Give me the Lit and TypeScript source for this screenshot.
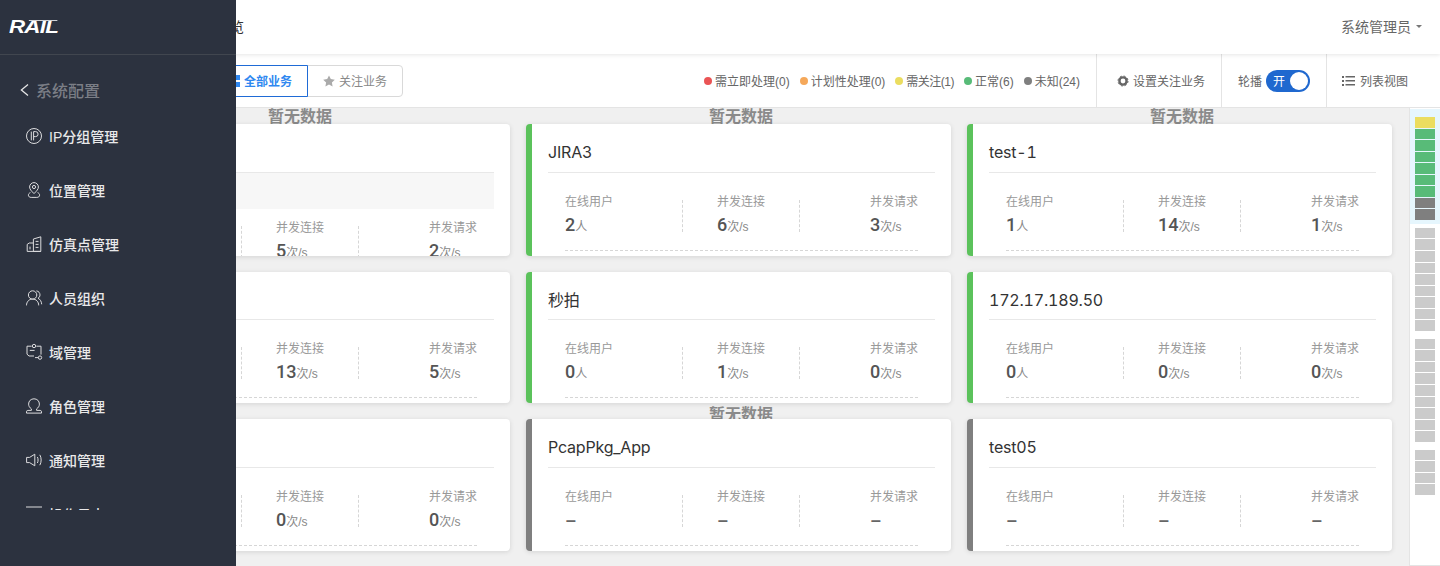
import { LitElement, html, css, svg, unsafeCSS } from 'lit';
import { customElement } from 'lit/decorators.js';

const FONT = unsafeCSS(`"Liberation Sans", "Noto Sans CJK SC", sans-serif`);

type Metric = { online: string; conn: string; req: string };
type CardData = { name: string; color: string; nodata?: boolean; band?: boolean; m?: Metric };

const GREEN = '#5bc25b';
const GREY = '#7f7f7f';

const cards: CardData[] = [
  { name: 'JIRA1', color: GREEN, nodata: true, band: true, m: { online: '1', conn: '5', req: '2' } },
  { name: 'JIRA3', color: GREEN, nodata: true, m: { online: '2', conn: '6', req: '3' } },
  { name: 'test-1', color: GREEN, nodata: true, m: { online: '1', conn: '14', req: '1' } },
  { name: 'GitLab', color: GREEN, m: { online: '3', conn: '13', req: '5' } },
  { name: '秒拍', color: GREEN, m: { online: '0', conn: '1', req: '0' } },
  { name: '172.17.189.50', color: GREEN, m: { online: '0', conn: '0', req: '0' } },
  { name: 'Wiki', color: GREEN, m: { online: '0', conn: '0', req: '0' } },
  { name: 'PcapPkg_App', color: GREY, nodata: true },
  { name: 'test05', color: GREY },
];

const legend = [
  { label: '需立即处理(0)', color: '#ea5455' },
  { label: '计划性处理(0)', color: '#f5a85a' },
  { label: '需关注(1)', color: '#ebdd60', tight: true },
  { label: '正常(6)', color: '#58bb78' },
  { label: '未知(24)', color: '#7f7f7f' },
];

const railGroups: string[][] = [
  ['#ebdd60', ...Array(6).fill('#58bb78'), '#7f7f7f', '#7f7f7f'],
  Array(9).fill('#cbcbcb'),
  Array(9).fill('#cbcbcb'),
  Array(4).fill('#cbcbcb'),
];

const icons = [
  svg`<circle cx="8" cy="8" r="7.5"/><path d="M5.3 3.6v8.8M7.6 12.4V3.6h2a2.5 2.5 0 0 1 0 5H7.6"/>`,
  svg`<path d="M8 11.6C5.4 9 3.6 7.2 3.6 5a4.4 4.4 0 0 1 8.8 0c0 2.2-1.8 4-4.4 6.6z"/><circle cx="8" cy="5" r="1.6"/><path d="M4.4 10.6C3 11.2 2.4 12 2.4 13.2c0 1.4 1.2 2.2 2.8 2.2h5.6c1.6 0 2.8-.8 2.8-2.2 0-1.2-.6-2-2-2.6"/>`,
  svg`<path d="M7.4 15.4V3L14.8.8v14.6zM7.4 7H3.2L1.2 8.4v7h13.6M9.6 5.4h2.9M9.6 8.4h2.9M9.6 11.4h2.9M4 10.6v2.8"/>`,
  svg`<circle cx="6.6" cy="5" r="4.2"/><path d="M.5 15.4c0-3.6 2.6-6.4 6.1-6.4s6.1 2.8 6.1 6.4M10.4 .9c2.2 .2 3.6 2 3.6 4 0 1.4-.8 2.7-2 3.4 2.2 .9 3.5 3.2 3.7 6"/>`,
  svg`<path d="M5.6 2.2H1v8l2 1.8h5M10.4 2.2h4.6v8.4M9 13.6h3.4"/><circle cx="8" cy="2" r="1.7"/><circle cx="14" cy="13.6" r="1.7"/><path d="M3.8 6.4h4.8"/>`,
  svg`<path d="M8 .8c3.2 0 5.4 2.3 5.4 5.3 0 2-1 3.5-2.8 4.8v1.5h3.6c.8 0 1.3.6 1.3 1.4v1.3H.5v-1.3c0-.8.5-1.4 1.3-1.4h3.6v-1.5C3.6 9.6 2.6 8.1 2.6 6.1 2.6 3.1 4.8.8 8 .8z"/>`,
  svg`<path d="M.6 5.4h3L8.8 2.2v11.6L3.6 10.6h-3zM11.4 5c.9 1.8.9 4.2 0 6M13.8 2.8c1.8 3 1.8 7.4 0 10.4"/>`,
  svg`<path d="M0 1h16M0 6h16M0 11h16"/>`,
];

const menu = ['IP分组管理', '位置管理', '仿真点管理', '人员组织', '域管理', '角色管理', '通知管理', '操作日志'];

@customElement('app-root')
export class AppRoot extends LitElement {
  static styles = css`
    :host {
      display: block;
      width: 1440px;
      height: 566px;
      overflow: hidden;
      position: relative;
      font-family: ${FONT};
      background: #f0f0f0;
      color: #666;
    }
    * { box-sizing: border-box; }

    .sidebar {
      position: absolute;
      left: 0;
      top: 0;
      bottom: 0;
      width: 236px;
      background: #2c323f;
      z-index: 5;
    }
    .logo {
      height: 55px;
      border-bottom: 1px solid #41464f;
      padding: 18px 0 0 9px;
    }
    .logo span {
      display: block;
      position: relative;
      width: 49px;
      font: italic bold 18px/18px "Liberation Sans", sans-serif;
      letter-spacing: -0.6px;
      color: #fff;
      transform: scaleX(1.24);
      transform-origin: left center;
    }
    .logo span::after {
      content: '';
      position: absolute;
      left: 16px;
      top: 2px;
      width: 23px;
      height: 1px;
      background: #cfd1d4;
    }
    .back {
      height: 54px;
      display: flex;
      align-items: center;
      padding: 16px 0 0 20px;
      gap: 7px;
      font-size: 16px;
      font-weight: 500;
      color: #7b7e86;
    }
    .back svg { width: 9px; height: 12px; fill: none; stroke: #e6e6e6; stroke-width: 1.3; }
    .menu {
      height: 401px;
      overflow: hidden;
    }
    .menu-item {
      height: 54px;
      display: flex;
      align-items: center;
      padding-left: 26px;
      gap: 7px;
      font-size: 14px;
      font-weight: 500;
      color: #e9e9ea;
    }
    .menu-item svg { width: 16px; height: 16px; fill: none; stroke: #dcdcde; stroke-width: 1; flex: none; overflow: visible; }

    .topbar {
      height: 54px;
      background: #fff;
      box-shadow: 0 1px 4px rgba(0, 0, 0, 0.1);
      position: relative;
      z-index: 2;
      display: flex;
      align-items: center;
      justify-content: space-between;
      padding: 0 18px 2px 188px;
      font-size: 14px;
      color: #333;
    }
    .user { color: #666; display: flex; align-items: center; gap: 5px; }
    .caret {
      width: 0;
      height: 0;
      border: 3px solid transparent;
      border-top: 3px solid #777;
      margin-top: 3px;
    }

    .toolbar {
      height: 54px;
      background: #fff;
      border-bottom: 1px solid #e4e4e4;
      display: flex;
      align-items: stretch;
      justify-content: space-between;
      padding-left: 212px;
      font-size: 12px;
      color: #666;
    }
    .tabs { display: flex; align-items: center; }
    .tab {
      width: 96px;
      height: 32px;
      display: flex;
      align-items: center;
      justify-content: center;
      gap: 4px;
      border: 1px solid #d9d9d9;
      color: #888;
      border-radius: 0 4px 4px 0;
      margin-left: -1px;
    }
    .tab.active {
      border-color: #1f6bd6;
      color: #2f88f0;
      font-weight: 700;
      border-radius: 4px 0 0 4px;
      margin-left: 0;
      position: relative;
      z-index: 1;
    }
    .tab svg { width: 12px; height: 12px; }
    .tools { display: flex; align-items: stretch; }
    .legend { display: flex; align-items: center; gap: 10px; padding-right: 16px; }
    .legend-item { display: flex; align-items: center; gap: 3px; white-space: nowrap; }
    .legend-item.tight { letter-spacing: -0.5px; }
    .dot { width: 8px; height: 8px; border-radius: 50%; }
    .tool {
      border-left: 1px solid #e4e4e4;
      display: flex;
      align-items: center;
      white-space: nowrap;
    }
    .tool.focus { width: 125px; padding-left: 20px; gap: 4px; }
    .tool.carousel { width: 105px; padding-left: 16px; gap: 4px; }
    .tool.view { width: 114px; padding-left: 15px; gap: 5px; }
    .tool svg { flex: none; }
    .switch {
      width: 44px;
      height: 22px;
      border-radius: 11px;
      background: #1f68cf;
      color: #fff;
      font-size: 12px;
      padding: 0 2px 0 7px;
      display: flex;
      align-items: center;
      justify-content: space-between;
    }
    .knob { width: 18px; height: 18px; border-radius: 50%; background: #fff; }

    .body {
      height: 458px;
      display: flex;
    }
    .grid {
      flex: 1;
      display: grid;
      grid-template-columns: repeat(3, 425px);
      grid-auto-rows: 131.5px;
      column-gap: 16px;
      row-gap: 16px;
      padding: 16px 0 0 85px;
    }
    .cell { position: relative; }
    .nodata {
      position: absolute;
      left: 5px;
      right: 0;
      top: -17px;
      text-align: center;
      font-size: 16px;
      line-height: 20px;
      font-weight: 700;
      color: #8a8a8a;
    }
    .cell:nth-child(8) .nodata { top: -14px; }
    .card {
      position: relative;
      height: 100%;
      overflow: hidden;
      background: #fff;
      border-radius: 4px;
      border-left: 6px solid;
      box-shadow: 0 1px 5px rgba(0, 0, 0, 0.12);
      padding: 0 16px;
    }
    .title {
      height: 48.5px;
      border-bottom: 1px solid #e8e8e8;
      padding-top: 17px;
      font: 400 16px/22px Inter, ${FONT};
      font-feature-settings: 'tnum';
      letter-spacing: -0.2px;
      color: #333;
    }
    .band { height: 36px; background: #f7f7f7; }
    .stats {
      margin: 0 17px;
      padding-top: 27px;
      height: 78px;
      display: flex;
      border-bottom: 1px dashed #d6d6d6;
    }
    .band + .stats { margin-top: -10px; }
    .stat { height: 32px; }
    .stat.first { width: 117px; }
    .stat.mid {
      width: 118px;
      border-left: 1px dashed #d6d6d6;
      border-right: 1px dashed #d6d6d6;
      padding-left: 34px;
    }
    .stat.last { width: 48px; margin-left: auto; }
    .label { font-size: 12px; line-height: 16px; color: #999; white-space: nowrap; margin-top: -6px; }
    .value {
      font: 500 18px/24px Roboto, ${FONT};
      margin-top: 3px;
      color: #555;
      white-space: nowrap;
    }
    .value.empty { margin-top: 5px; color: #666; }
    .value small { font: 400 12px ${FONT}; color: #888; }

    .rail {
      width: 31px;
      height: 100%;
      background: #fff;
      border-left: 1px solid #e4e4e4;
      border-bottom: 1px solid #e4e4e4;
      padding-top: 1px;
    }
    .rail-group { padding: 4px 5px; display: flex; flex-direction: column; gap: 1px; }
    .rail-group.on { background: #e6f6fd; padding-top: 8px; }
    .rail-item { height: 10.55px; width: 20px; }
  `;

  private renderStats(c: CardData) {
    const m = c.m;
    const stat = (v: string | undefined, unit: string) =>
      v === undefined ? html`<div class="value empty">–</div>` : html`<div class="value">${v}<small>${unit}</small></div>`;
    return html`
      <div class="stats">
        <div class="stat first"><div class="label">在线用户</div>${stat(m?.online, '人')}</div>
        <div class="stat mid"><div class="label">并发连接</div>${stat(m?.conn, '次/s')}</div>
        <div class="stat last"><div class="label">并发请求</div>${stat(m?.req, '次/s')}</div>
      </div>
    `;
  }

  render() {
    return html`
      <aside class="sidebar">
        <div class="logo"><span>RAIL</span></div>
        <div class="back">
          <svg viewBox="0 0 9 12"><path d="M8 .6 1.4 6 8 11.4"/></svg>
          系统配置
        </div>
        <div class="menu">
          ${menu.map(
            (m, i) => html`<div class="menu-item"><svg viewBox="0 0 16 16">${icons[i]}</svg>${m}</div>`
          )}
        </div>
      </aside>

      <div class="topbar">
        <span>业务总览</span>
        <span class="user">系统管理员<i class="caret"></i></span>
      </div>

      <div class="toolbar">
        <div class="tabs">
          <div class="tab active">
            <svg viewBox="0 0 12 12" fill="#2f88f0"><path d="M0 0h5v5H0zM7 0h5v5H7zM0 7h5v5H0zM7 7h5v5H7z"/></svg>
            全部业务
          </div>
          <div class="tab">
            <svg viewBox="0 0 12 12" fill="#aaa"><path d="m6 .4 1.8 3.7 4 .6-2.9 2.8.7 4L6 9.6l-3.6 1.9.7-4L.2 4.7l4-.6z"/></svg>
            关注业务
          </div>
        </div>
        <div class="tools">
          <div class="legend">
            ${legend.map(
              (l) => html`<span class="legend-item ${l.tight ? 'tight' : ''}"><i class="dot" style="background:${l.color}"></i>${l.label}</span>`
            )}
          </div>
          <div class="tool focus">
            <svg width="12" height="12" viewBox="0 0 12 12" fill="none" stroke="#666" stroke-width="2.4"><circle cx="6" cy="6" r="3.6"/><circle cx="6" cy="6" r="5" stroke-width="1" stroke-dasharray="2 1.93"/></svg>
            设置关注业务
          </div>
          <div class="tool carousel">
            轮播
            <span class="switch">开<i class="knob"></i></span>
          </div>
          <div class="tool view">
            <svg width="13" height="10" viewBox="0 0 13 10" fill="#666"><path d="M0 0h2v2H0zM3.5 0H13v1.4H3.5zM0 4h2v2H0zM3.5 4H13v1.4H3.5zM0 8h2v2H0zM3.5 8H13v1.4H3.5z"/></svg>
            列表视图
          </div>
        </div>
      </div>

      <div class="body">
        <div class="grid">
          ${cards.map(
            (c) => html`
              <div class="cell">
                ${c.nodata ? html`<div class="nodata">暂无数据</div>` : ''}
                <div class="card" style="border-left-color:${c.color}">
                  <div class="title">${c.name}</div>
                  ${c.band ? html`<div class="band"></div>` : ''}
                  ${this.renderStats(c)}
                </div>
              </div>
            `
          )}
        </div>
        <div class="rail">
          ${railGroups.map(
            (g, i) => html`
              <div class="rail-group ${i === 0 ? 'on' : ''}">
                ${g.map((color) => html`<div class="rail-item" style="background:${color}"></div>`)}
              </div>
            `
          )}
        </div>
      </div>
    `;
  }
}
